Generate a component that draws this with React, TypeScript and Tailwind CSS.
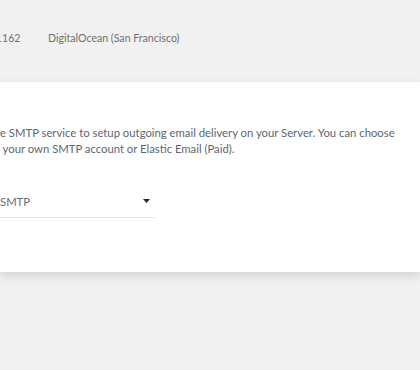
import React from "react";

const Clip = ({ children, className = "" }: { children: React.ReactNode; className?: string }) => (
  <span className={`inline-flex w-0 justify-end whitespace-nowrap ${className}`}>{children}</span>
);

export default function App() {
  return (
    <div className="w-[420px] h-[370px] overflow-hidden bg-[#f1f1f1] font-['Lato',sans-serif]">
      <div className="h-[82px] pt-[31px] flex text-[10.6px] text-[#707070] whitespace-nowrap">
        <div className="w-[48px] pl-[2px]">
          <Clip>138.68.11</Clip>162
        </div>
        <div>DigitalOcean (San Francisco)</div>
      </div>
      <div className="h-[190px] bg-white shadow-[0_4px_10px_rgba(0,0,0,0.13)] pt-[43px]">
        <div className="text-[11.3px] leading-[16px] text-[#5d6572] whitespace-nowrap">
          <div>
            <Clip>Use th</Clip>e SMTP service to setup outgoing email delivery on your Server. You can choose
          </div>
          <div>
            <Clip className="text-[#29a9df]">Use a</Clip> your own SMTP account or Elastic Email (Paid).
          </div>
        </div>
        <div className="mt-[35px] w-[155px] h-[26px] border-b border-[#e6e6e6] flex items-start justify-between pt-[2px] text-[11.3px] text-[#666c75]">
          <span className="whitespace-nowrap">
            <Clip>Own </Clip>SMTP
          </span>
          <svg width="7" height="4" viewBox="0 0 7 4" className="mr-[5px] mt-[5px]">
            <path d="M0 0h7L3.5 4z" fill="#1d2a44" />
          </svg>
        </div>
      </div>
    </div>
  );
}
